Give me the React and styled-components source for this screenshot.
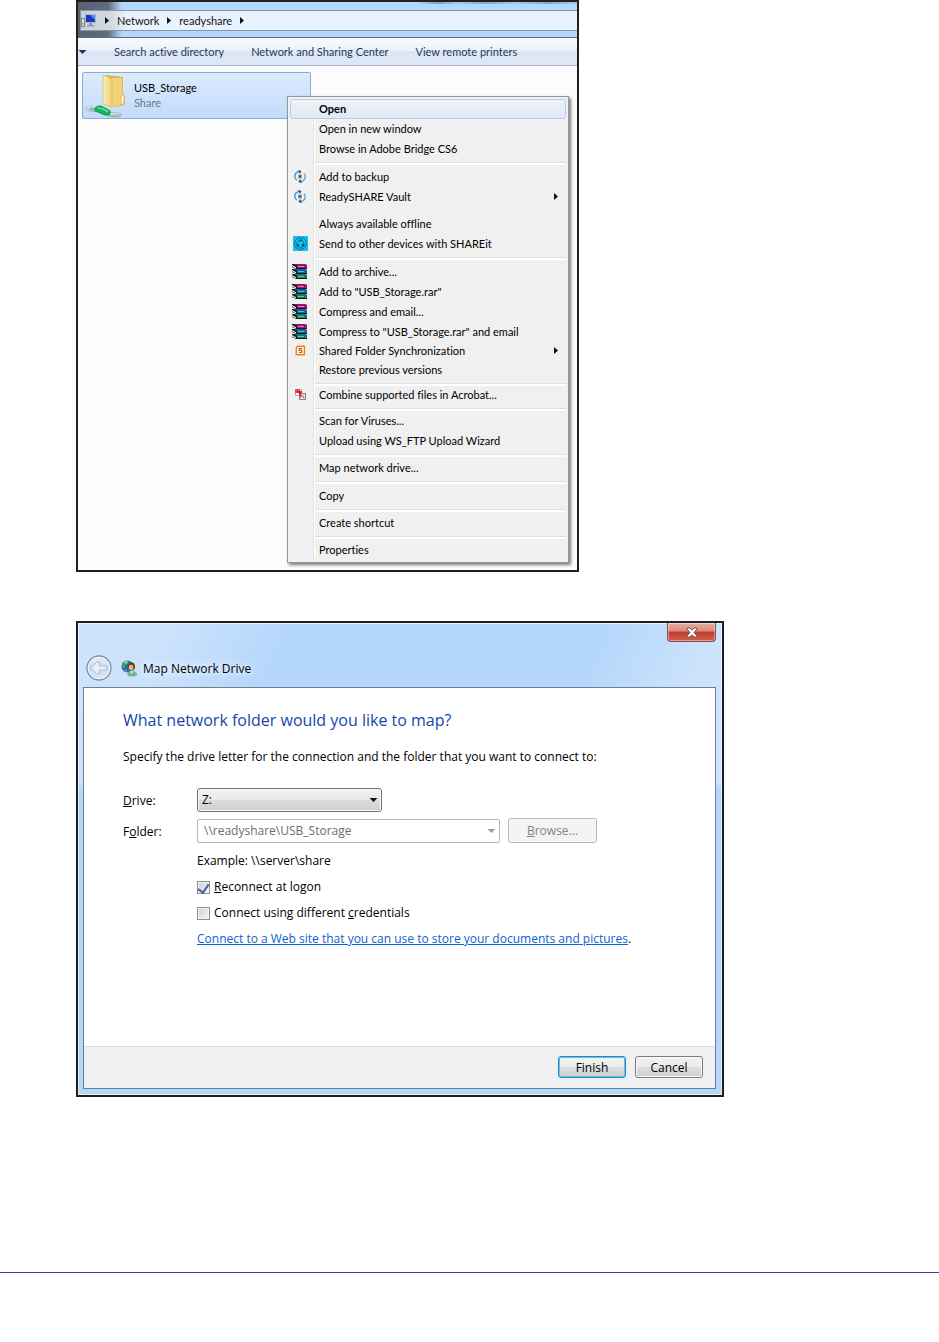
import React, { useState } from 'react'
import styled, { createGlobalStyle, css } from 'styled-components'

const menuItems = [
    { label: 'Open', active: true },
    { label: 'Open in new window' },
    { label: 'Browse in Adobe Bridge CS6' },
    { gap: 8, line: true },
    { label: 'Add to backup', icon: 'sync' },
    { label: 'ReadySHARE Vault', icon: 'sync', more: true },
    { gap: 7 },
    { label: 'Always available offline' },
    { label: 'Send to other devices with SHAREit', icon: 'shareit' },
    { gap: 8, line: true },
    { label: 'Add to archive...', icon: 'rar' },
    { label: 'Add to "USB_Storage.rar"', icon: 'rar' },
    { label: 'Compress and email...', icon: 'rar' },
    { label: 'Compress to "USB_Storage.rar" and email', icon: 'rar' },
    { label: 'Shared Folder Synchronization', icon: 'folderSync', more: true, compact: true },
    { label: 'Restore previous versions', compact: true },
    { gap: 6, line: true },
    { label: 'Combine supported files in Acrobat...', icon: 'acrobat', compact: true },
    { gap: 6, line: true },
    { label: 'Scan for Viruses...' },
    { label: 'Upload using WS_FTP Upload Wizard' },
    { gap: 7, line: true },
    { label: 'Map network drive...' },
    { gap: 8, line: true },
    { label: 'Copy' },
    { gap: 7, line: true },
    { label: 'Create shortcut' },
    { gap: 7, line: true },
    { label: 'Properties' },
]

// icons
const SyncIcon = () => (
    <svg width="12" height="13" viewBox="0 0 12 13">
        <path d="M5 1.500 C2.500 2 0.800 4 0.800 6.500 C1 8 1.800 9.500 2.800 10.200" fill="none" stroke="#3fa3d8" strokeWidth="1.500" />
        <path d="M7 11.500 C9.500 11 11.200 9 11.200 6.500 C11 5 10.500 4 9.800 3.500" fill="none" stroke="#5cb4e4" strokeWidth="1.500" />
        <path d="M4 0 L7.500 1 L6 4 Z" fill="#1c4f96" />
        <path d="M8 13 L4.500 12 L6 9 Z" fill="#1c3f86" />
        <rect x="4" y="4.500" width="4" height="4" fill="#a0a0a0" />
        <rect x="5" y="5.500" width="2" height="2" fill="#555" />
    </svg>
)

const ShareitIcon = () => (
    <svg width="15" height="15" viewBox="0 0 15 15">
        <rect width="15" height="15" fill="#10c4e4" />
        <circle cx="7.500" cy="7.500" r="6" fill="none" stroke="#0c6cab" strokeWidth="1" />
        <path d="M4.500 9.500 C3.300 6 5.500 4.500 7.500 4.300 C9.500 4.500 11.700 6 10.500 9.500 M5.500 11 C7 12 8 12 9.500 11" fill="none" stroke="#0b5ca0" strokeWidth="1" />
        <circle cx="7.500" cy="4.300" r="1.200" fill="#0b4c90" />
        <circle cx="4.800" cy="9.500" r="1.400" fill="#0b4c90" />
        <circle cx="10.200" cy="9.500" r="1.400" fill="#0b4c90" />
    </svg>
)

const RarIcon = () => (
    <svg width="16" height="15" viewBox="0 0 16 15">
        {[
            ['#9c1468', '#e878bc', 0],
            ['#0f62ac', '#60b4f0', 5],
            ['#10805c', '#58d0a0', 10],
        ].map(([fill, light, y]) => (
            <g key={y} transform={`translate(0 ${y})`}>
                <path d="M0 0 H12 L15 1 V5 H4 L0 3 Z" fill="#161616" />
                <path d="M1.500 0 H12 L15 1 V4 H5 V1.500 Z" fill={fill} />
                <path d="M6 2 H12 V3 H6 Z" fill={light} />
                <path d="M0 1 L4 3.200 V4.500 L0 2.300 Z" fill="#f4f4f4" />
            </g>
        ))}
    </svg>
)

const FolderSyncIcon = () => (
    <svg width="11" height="11" viewBox="0 0 11 11">
        <rect width="11" height="11" fill="#fff" />
        <path d="M2.500 1.200 H9.500 V9.800 H1.200 V2.500 Z" fill="#fff3df" stroke="#ea7d18" strokeWidth="1.400" />
        <path d="M7 3.500 H4.300 V5.400 H6.700 V7.500 H4" fill="none" stroke="#d85c08" strokeWidth="1.200" />
    </svg>
)

const AcrobatIcon = () => (
    <svg width="11" height="11" viewBox="0 0 11 11">
        <rect x="0.500" y="0.500" width="6" height="6" fill="#fff" stroke="#c0a8a8" />
        <rect x="4.500" y="4.500" width="6" height="6" fill="#e4e0e0" stroke="#888" />
        <path d="M0 0 H5 V2 H2 L3 4 H0 Z" fill="#d8505a" />
        <path d="M2 2 H7 V4 H6 V7 H4 V4 H2 Z" fill="#d8202a" />
        <path d="M5 9 L7 6 L9 9" fill="none" stroke="#c85058" />
    </svg>
)

const icons = {
    sync: SyncIcon,
    shareit: ShareitIcon,
    rar: RarIcon,
    folderSync: FolderSyncIcon,
    acrobat: AcrobatIcon,
}

const Arrow = ({ down, color = '#111' }) => (
    down
        ? <svg width="9" height="4" viewBox="0 0 9 4"><path d="M0.500 0 H8.500 L4.500 4 Z" fill={color} /></svg>
        : <svg width="4" height="7" viewBox="0 0 4 7"><path d="M0 0 L4 3.500 L0 7 Z" fill={color} /></svg>
)

const ComputerIcon = () => (
    <svg width="16" height="14" viewBox="0 0 16 14">
        <rect x="0.500" y="4.500" width="3" height="8" fill="#e0e0dc" stroke="#85877f" />
        <rect x="1.500" y="9" width="1" height="2" fill="#4aa840" />
        <rect x="4.500" y="0.500" width="10" height="8" fill="#1a35c8" stroke="#a9b4c8" />
        <path d="M9 1 H14 V6 Z" fill="#5d86f0" />
        <path d="M8 9 H11 V11 H13 V12.500 H6 V11 H8 Z" fill="#8f99aa" />
    </svg>
)

const SharedFolderIcon = () => (
    <svg width="42" height="44" viewBox="0 0 42 44">
        <defs>
            <linearGradient id="folderFront" x1="0" x2="1">
                <stop offset="0" stopColor="#fdf0b4" />
                <stop offset="1" stopColor="#eed078" />
            </linearGradient>
            <linearGradient id="pipe" x1="0" x2="0" y1="0" y2="1">
                <stop offset="0" stopColor="#f4f8f8" />
                <stop offset="1" stopColor="#8fa7ac" />
            </linearGradient>
        </defs>
        <path d="M21 1 L38 3 V21 L40 22 V30 L37 32 L24 33 Z" fill="#dcb450" />
        <path d="M27 4 L37 4 V31 L27 33 Z" fill="#f0d27a" />
        <path d="M18 1 L25 4 Q27 5 27 7 V33 L19 30 Q18 29 18 28 Z" fill="url(#folderFront)" stroke="#d8b658" strokeWidth="0.700" />
        <path d="M36 22 L39 20 V29 L36 31 Z" fill="#fff8dc" stroke="#d2ae4b" strokeWidth="0.700" />
        <path d="M1 33 Q4 31 9 33 L13 35 L11 38 Q4 38 1 35 Z" fill="url(#pipe)" stroke="#a9bcbe" strokeWidth="0.600" />
        <path d="M5 34 L12 36" stroke="#59c58c" strokeWidth="1.400" />
        <path d="M23 38 L34 39 Q37 40 36 42 Q32 44 23 42 Z" fill="url(#pipe)" stroke="#8ba1a5" strokeWidth="0.600" />
        <path d="M10 34 Q13 31 16 32 L24 36 Q27 38 24 41 Q20 42 15 39 L10 37 Z" fill="#12b455" stroke="#0a9a4a" strokeWidth="0.800" />
        <path d="M12 34 Q18 34 23 38" fill="none" stroke="#7ff0ab" strokeWidth="1.200" />
    </svg>
)

const BackIcon = () => (
    <svg width="26" height="26" viewBox="0 0 26 26">
        <defs>
            <linearGradient id="back" x1="0" x2="0" y1="0" y2="1">
                <stop offset="0" stopColor="#eaf2fa" />
                <stop offset="0.500" stopColor="#c9d8e8" />
                <stop offset="1" stopColor="#e0edf9" />
            </linearGradient>
        </defs>
        <circle cx="13" cy="13" r="12" fill="url(#back)" stroke="#8190a3" strokeWidth="1.300" />
        <circle cx="13" cy="13" r="10.800" fill="none" stroke="#f0f6fd" />
        <path d="M5 13 L11 7 H13.500 V11 H20.500 V15 H13.500 V19 H11 Z" fill="#e6eef7" stroke="#b3c2d3" strokeLinejoin="round" />
    </svg>
)

const NetworkDriveIcon = () => (
    <svg width="17" height="17" viewBox="0 0 17 17">
        <circle cx="6.500" cy="6.500" r="6" fill="#2467b8" />
        <path d="M1 4 Q4 0 8 1 L7 4 L4 5 L4 8 L1.500 8 Q0 6 1 4 Z" fill="#45a845" />
        <path d="M3 2.500 Q5 1 7 1.500 L5 3.500 Z" fill="#c8f0c0" />
        <path d="M3 9 L6 10 L6 12 Q4 12 3 9 Z" fill="#67bd58" />
        <ellipse cx="10.500" cy="6.500" rx="3.500" ry="4" fill="#664327" />
        <ellipse cx="10" cy="7.500" rx="2.200" ry="2.800" fill="#e6b78c" />
        <path d="M6.500 16 Q6 11 10 11 Q14 10 16.500 14.500 Q15 17 11 16.500 Z" fill="#7cb296" />
        <path d="M9 11.500 L11 14 L12 11 Z" fill="#f0f5f0" />
    </svg>
)

const CloseIcon = () => (
    <svg width="12" height="11" viewBox="0 0 12 11">
        <path d="M1 1 H4 L6 3.300 L8 1 H11 V2 L8 5.500 L11 9 V10 H8 L6 7.700 L4 10 H1 V9 L4 5.500 L1 2 Z" fill="#fff" stroke="#6d5560" strokeLinejoin="round" />
    </svg>
)

function ContextMenu() {
    return (
        <Menu aria-label="Folder menu">
            {menuItems.map((item, i) => {
                if (!item.label) {
                    return <Separator key={i} $gap={item.gap} $line={item.line} />
                }
                const Icon = icons[item.icon]
                return (
                    <MenuItem key={item.label} type="button" $active={item.active} $compact={item.compact}>
                        <IconSlot>{Icon && <Icon />}</IconSlot>
                        <span>{item.label}</span>
                        {item.more && <Arrow />}
                    </MenuItem>
                )
            })}
        </Menu>
    )
}

function ExplorerWindow() {
    return (
        <Explorer>
            <AddressArea>
                <AddressBar aria-label="Address">
                    <ComputerIcon />
                    <Arrow />
                    <a href="#network">Network</a>
                    <Arrow />
                    <a href="#readyshare">readyshare</a>
                    <Arrow />
                </AddressBar>
            </AddressArea>
            <Toolbar>
                <Arrow down color="#1e395b" />
                <ToolButton type="button">Search active directory</ToolButton>
                <ToolButton type="button">Network and Sharing Center</ToolButton>
                <ToolButton type="button">View remote printers</ToolButton>
            </Toolbar>
            <Files>
                <FileTile type="button">
                    <SharedFolderIcon />
                    <FileText>
                        <span>USB_Storage</span>
                        <small>Share</small>
                    </FileText>
                </FileTile>
                <ContextMenu />
            </Files>
        </Explorer>
    )
}

function MapDriveDialog() {
    const [drive, setDrive] = useState('Z:')
    const [reconnect, setReconnect] = useState(true)
    const [otherUser, setOtherUser] = useState(false)

    return (
        <Dialog>
            <TitleBar>
                <BackButton type="button" aria-label="Back"><BackIcon /></BackButton>
                <NetworkDriveIcon />
                <Title>Map Network Drive</Title>
                <CloseButton type="button" aria-label="Close"><CloseIcon /></CloseButton>
            </TitleBar>
            <Client>
                <Body>
                    <Heading>What network folder would you like to map?</Heading>
                    <Intro>Specify the drive letter for the connection and the folder that you want to connect to:</Intro>
                    <Form>
                        <label htmlFor="drive"><u>D</u>rive:</label>
                        <Field $width="185px">
                            <DriveSelect id="drive" value={drive} onChange={(e) => setDrive(e.target.value)}>
                                <option>Z:</option>
                                <option>Y:</option>
                            </DriveSelect>
                            <Arrow down />
                        </Field>
                        <label htmlFor="folder">F<u>o</u>lder:</label>
                        <FolderRow>
                            <Field $width="303px">
                                <FolderInput id="folder" value="\\readyshare\USB_Storage" disabled readOnly />
                                <Arrow down color="#a0a0a0" />
                            </Field>
                            <Button type="button" $wide disabled><u>B</u>rowse...</Button>
                        </FolderRow>
                    </Form>
                    <Options>
                        <p>Example: \\server\share</p>
                        <Check>
                            <input type="checkbox" checked={reconnect} onChange={() => setReconnect(!reconnect)} />
                            <span><u>R</u>econnect at logon</span>
                        </Check>
                        <Check>
                            <input type="checkbox" checked={otherUser} onChange={() => setOtherUser(!otherUser)} />
                            <span>Connect using different <u>c</u>redentials</span>
                        </Check>
                        <p><a href="#website">Connect to a Web site that you can use to store your documents and pictures</a>.</p>
                    </Options>
                </Body>
                <Actions>
                    <Button type="button" $primary>Finish</Button>
                    <Button type="button">Cancel</Button>
                </Actions>
            </Client>
        </Dialog>
    )
}

export default function App() {
    return (
        <>
            <GlobalStyle />
            <Page>
                <Figures>
                    <ExplorerWindow />
                    <MapDriveDialog />
                </Figures>
                <PageFooter />
            </Page>
        </>
    )
}

const GlobalStyle = createGlobalStyle`
* {
    box-sizing: border-box;
}
body {
    margin: 0;
    background: #fff;
    color: #000;
    font-family: "Open Sans", "Noto Sans", sans-serif;
    font-size: 12px;
    font-variant-ligatures: none;
}
button, input, select {
    font: inherit;
    font-variant-ligatures: none;
    color: inherit;
}
p, h1, h2 {
    margin: 0;
}
svg {
    display: block;
    flex-shrink: 0;
}
`

const Page = styled.div`
min-height: 100vh;
display: flex;
flex-direction: column;
`

const Figures = styled.main`
display: flex;
flex-direction: column;
gap: 49px;
padding: 0 76px;
`

const PageFooter = styled.footer`
height: 70px;
margin-top: auto;
border-top: 1px solid #662d91;
`

const Explorer = styled.section`
max-width: 503px;
border: 2px solid #231f20;
font-family: Lato, "Open Sans", sans-serif;
font-size: 11px;
`

const AddressArea = styled.div`
padding: 8px 0 6px 2px;
background:
    linear-gradient(90deg, transparent 68%, #7c9cc0 72%, #a6c8ec 76%, #84a6cc 82%, #a6c8ec 88%, #84a6cc 94%, #a6c8ec) top / 100% 2px no-repeat,
    linear-gradient(90deg, #57626e 0, #606e7e 30px, #b5d7fc 44px);
border-bottom: 1px solid #5f6c7c;
`

const AddressBar = styled.nav`
display: flex;
align-items: center;
gap: 8px;
height: 21px;
border: 1px solid #8795a8;
border-right: 0;
background: linear-gradient(90deg, #c9cfd6 0, #d3d9e0 30px, #e9f3ff 46px);
a {
    color: #111;
    text-decoration: none;
}
`

const Toolbar = styled.div`
display: flex;
align-items: center;
gap: 27px;
height: 28px;
background: linear-gradient(#f8fbff 0, #e9f0fa 50%, #dbe5f3 50%, #dde7f5 100%);
border-bottom: 1px solid #a0afc3;
`

const ToolButton = styled.button`
padding: 0;
border: 0;
background: none;
color: #1e395b;
white-space: nowrap;
`

const Files = styled.div`
position: relative;
min-height: 504px;
padding: 6px 4px;
background: #fcfcfc;
`

const FileTile = styled.button`
display: flex;
align-items: flex-start;
gap: 7px;
width: 229px;
height: 47px;
padding: 1px 2px;
border: 1px solid #84acdd;
border-radius: 2px;
background: linear-gradient(#dcebfd, #c1dbfc);
text-align: left;
`

const FileText = styled.span`
display: flex;
flex-direction: column;
padding-top: 6px;
line-height: 15px;
small {
    font-size: 11px;
    color: #6d7886;
}
`

const Menu = styled.div`
position: absolute;
top: 30px;
left: 209px;
width: 282px;
padding: 2px;
border: 1px solid #979797;
background: linear-gradient(90deg, #f1f1f1 25px, #e2e3e3 25px, #e2e3e3 26px, #fff 26px, #fff 27px, #f0f0f0 27px);
box-shadow: 2px 2px 3px rgba(0, 0, 0, 0.5);
`

const MenuItem = styled.button`
display: flex;
align-items: center;
width: 100%;
height: ${({ $compact }) => ($compact ? 19 : 20)}px;
padding: 0 7px 2px 0;
border: 1px solid transparent;
border-radius: 3px;
background: none;
text-align: left;
span:nth-child(2) {
    flex: 1;
    white-space: nowrap;
}
${({ $active }) => $active && css`
    border-color: #aecff7;
    background: linear-gradient(rgba(240, 244, 250, 0.6), rgba(215, 228, 246, 0.6));
    font-weight: 700;
`}
`

const IconSlot = styled.span`
display: flex;
justify-content: center;
width: 18px;
margin-right: 10px;
`

const Separator = styled.div`
height: ${({ $gap }) => $gap}px;
margin-left: 25px;
padding-top: 3px;
&::before {
    content: "";
    display: ${({ $line }) => ($line ? 'block' : 'none')};
    height: 2px;
    border-top: 1px solid #e0e0e0;
    background: #fff;
}
`

const Dialog = styled.section`
max-width: 648px;
padding: 0 6px 6px 5px;
border: 2px solid #231f20;
background:
    linear-gradient(transparent 160px, #b5d7fc 164px),
    linear-gradient(115deg, #cfe4fc 0, #cbe2fc 90px, #b5d7fb 190px, #b5d7fb 62%, #cfe4fc 76%, #d3e6fc 100%);
box-shadow: inset 0 0 0 1px #e4f1ff;
`

const TitleBar = styled.header`
display: flex;
align-items: center;
height: 64px;
padding: 26px 0 0 3px;
`

const BackButton = styled.button`
margin-right: 9px;
padding: 0;
border: 0;
background: none;
`

const Title = styled.h1`
margin-left: 5px;
font-size: 12px;
font-weight: 400;
text-shadow: 0 0 8px #fff, 0 0 8px #fff;
`

const CloseButton = styled.button`
display: flex;
align-items: center;
justify-content: center;
align-self: flex-start;
width: 49px;
height: 19px;
margin: -26px 0 0 auto;
border: 1px solid #8a4a50;
border-top: 0;
border-radius: 0 0 4px 4px;
background: linear-gradient(#eab0a6 0, #dc8878 45%, #c03a26 50%, #d0604c 100%);
box-shadow: inset 0 0 0 1px rgba(255, 255, 255, 0.4);
`

const Client = styled.div`
border: 1px solid #6f7f93;
background: #fff;
`

const Body = styled.div`
min-height: 358px;
padding: 20px 39px;
line-height: 20px;
`

const Heading = styled.h2`
font-size: 16px;
font-weight: 400;
line-height: 24px;
color: #1446a8;
`

const Intro = styled.p`
margin-top: 15px;
white-space: nowrap;
`

const Form = styled.div`
display: grid;
grid-template-columns: 74px 1fr;
align-items: center;
gap: 6px 0;
margin-top: 21px;
label {
    padding-top: 2px;
}
`

const FolderRow = styled.div`
display: flex;
align-items: center;
gap: 8px;
`

const Field = styled.div`
position: relative;
width: ${({ $width }) => $width};
svg {
    position: absolute;
    top: 10px;
    right: 4px;
    pointer-events: none;
}
`

const DriveSelect = styled.select`
display: block;
width: 100%;
height: 24px;
padding: 0 4px;
appearance: none;
border: 1px solid #707070;
border-radius: 3px;
background: linear-gradient(#f2f2f2 0, #e8e8e8 50%, #dcdcdc 50%, #d0d0d0 100%);
box-shadow: inset 0 0 0 1px #fafafa;
`

const FolderInput = styled.input`
display: block;
width: 100%;
height: 24px;
padding: 0 20px 0 6px;
border: 1px solid #b4b8bd;
border-radius: 2px;
background: #fff;
color: #6d6d6d;
`

const Button = styled.button`
width: ${({ $wide }) => ($wide ? 89 : 68)}px;
height: ${({ $wide }) => ($wide ? 25 : 22)}px;
padding: 0;
border: 1px solid #7c7c7c;
border-radius: 3px;
background: linear-gradient(#f2f2f2 0, #ebebeb 50%, #dddddd 50%, #d0d0d0 100%);
box-shadow: inset 0 0 0 1px #fafafa;
${({ $primary }) => $primary && css`
    border-color: #3c7fb1;
    box-shadow: inset 0 0 0 1px #46cdf2;
`}
&:disabled {
    border-color: #b4b8bd;
    background: #f4f4f4;
    color: #838383;
}
`

const Options = styled.div`
display: flex;
flex-direction: column;
gap: 6px;
padding: 8px 0 0 74px;
white-space: nowrap;
a {
    color: #0b63cd;
}
`

const Check = styled.label`
display: flex;
align-items: center;
gap: 4px;
input {
    display: flex;
    align-items: flex-start;
    justify-content: center;
    width: 13px;
    height: 13px;
    margin: 0;
    appearance: none;
    border: 1px solid #8e8f8f;
    background: linear-gradient(135deg, #cbcfd5, #f6f6f6);
    box-shadow: inset 0 0 0 1px #f4f4f4;
}
input:checked::before {
    content: "";
    width: 5px;
    height: 9px;
    border: solid #4b5f9c;
    border-width: 0 2px 2px 0;
    transform: rotate(35deg);
}
`

const Actions = styled.footer`
display: flex;
justify-content: flex-end;
gap: 9px;
padding: 9px 12px 10px;
border-top: 1px solid #dfdfdf;
background: #f0f0f0;
`
